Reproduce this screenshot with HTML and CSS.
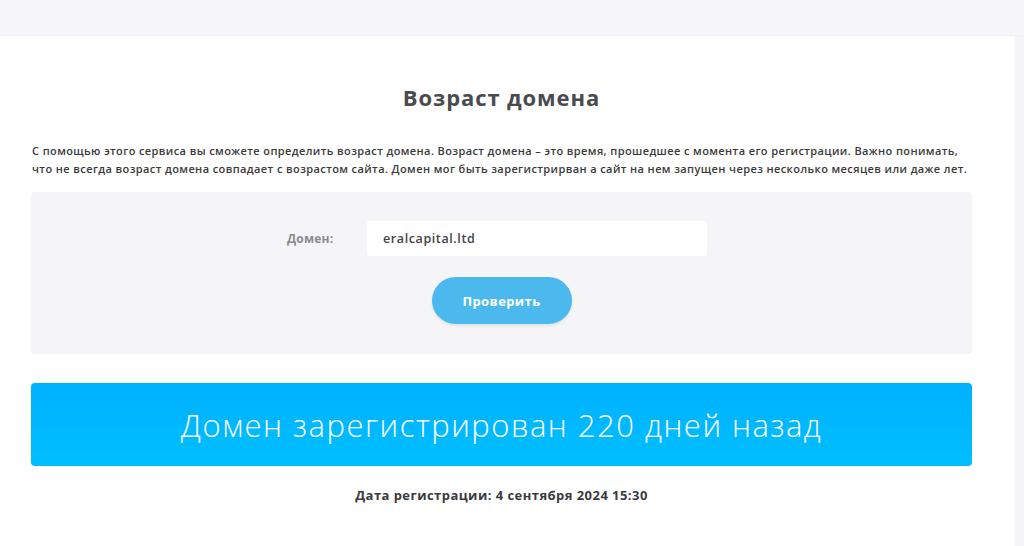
FILE: index.html
```html
<!DOCTYPE html>
<html lang="ru">
<head>
<meta charset="utf-8">
<link rel="stylesheet" href="styles.css">
</head>
<body>
<div class="topbar"></div>
<div class="page">
  <main class="content">
    <h1 class="title">Возраст домена</h1>
    <p class="desc">С помощью этого сервиса вы сможете определить возраст домена. Возраст домена – это время, прошедшее с момента его регистрации. Важно понимать, что не всегда возраст домена совпадает с возрастом сайта. Домен мог быть зарегистрирван а сайт на нем запущен через несколько месяцев или даже лет.</p>
    <form class="form">
      <div class="row">
        <label class="label">Домен:</label>
        <div class="input">eralcapital.ltd</div>
      </div>
      <button type="button" class="btn">Проверить</button>
    </form>
    <div class="banner">Домен зарегистрирован 220 дней назад</div>
    <p class="date">Дата регистрации: 4 сентября 2024 15:30</p>
  </main>
  <div class="side"></div>
</div>
</body>
</html>
```
FILE: styles.css
```css
html, body { margin: 0; padding: 0; background: #f5f4f8; }
body { font-family: "Open Sans", "Liberation Sans", sans-serif; color: #333; height: 546px; overflow: hidden; }
.topbar { height: 35px; background: #f7f7fb; border-bottom: 1px solid #f1f0f4; }
.page { display: flex; }
.content { width: 941px; padding: 0 43px 60px 31px; background: #fff; display: flex; flex-direction: column; }
.side { flex: 1; background: #f5f4f8; }
.title { margin: 46px 0 0; text-align: center; font-size: 22px; font-weight: 700; color: #4a4a4f; line-height: 30px; letter-spacing: 0.9px; }
.desc { margin: 30px 0 0 1px; font-size: 11px; line-height: 18px; color: #3a3a3a; font-weight: 600; letter-spacing: 0.4px; }
.form { margin-top: 14px; background: #f5f5f8; border-radius: 4px; height: 162px; box-sizing: border-box; padding-top: 29px; display: flex; flex-direction: column; align-items: center; }
.row { display: flex; align-items: center; margin-right: 9px; }
.label { width: 80px; font-size: 12px; font-weight: 700; color: #8a8a8f; letter-spacing: 0.2px; }
.input { width: 324px; height: 35px; background: #fff; border-radius: 3px; padding-left: 16px; display: flex; align-items: center; font-size: 12.5px; color: #444; font-weight: 600; letter-spacing: 0.6px; }
.btn { margin-top: 21px; width: 140px; height: 47px; border: 0; border-radius: 24px; background: #4bb9ed; color: #fff; font-family: inherit; font-size: 13px; font-weight: 700; letter-spacing: 0.4px; box-shadow: 0 2px 3px rgba(0,0,0,0.08); }
.banner { margin-top: 29px; height: 83px; border-radius: 4px; background: linear-gradient(#00b1ff, #00bfff); color: #fff; font-size: 31px; font-weight: 300; display: flex; align-items: center; justify-content: center; letter-spacing: 1.5px; }
.date { margin: 20px 0 0; text-align: center; font-size: 13px; font-weight: 700; color: #3a3a3f; letter-spacing: 0.45px; }
```
